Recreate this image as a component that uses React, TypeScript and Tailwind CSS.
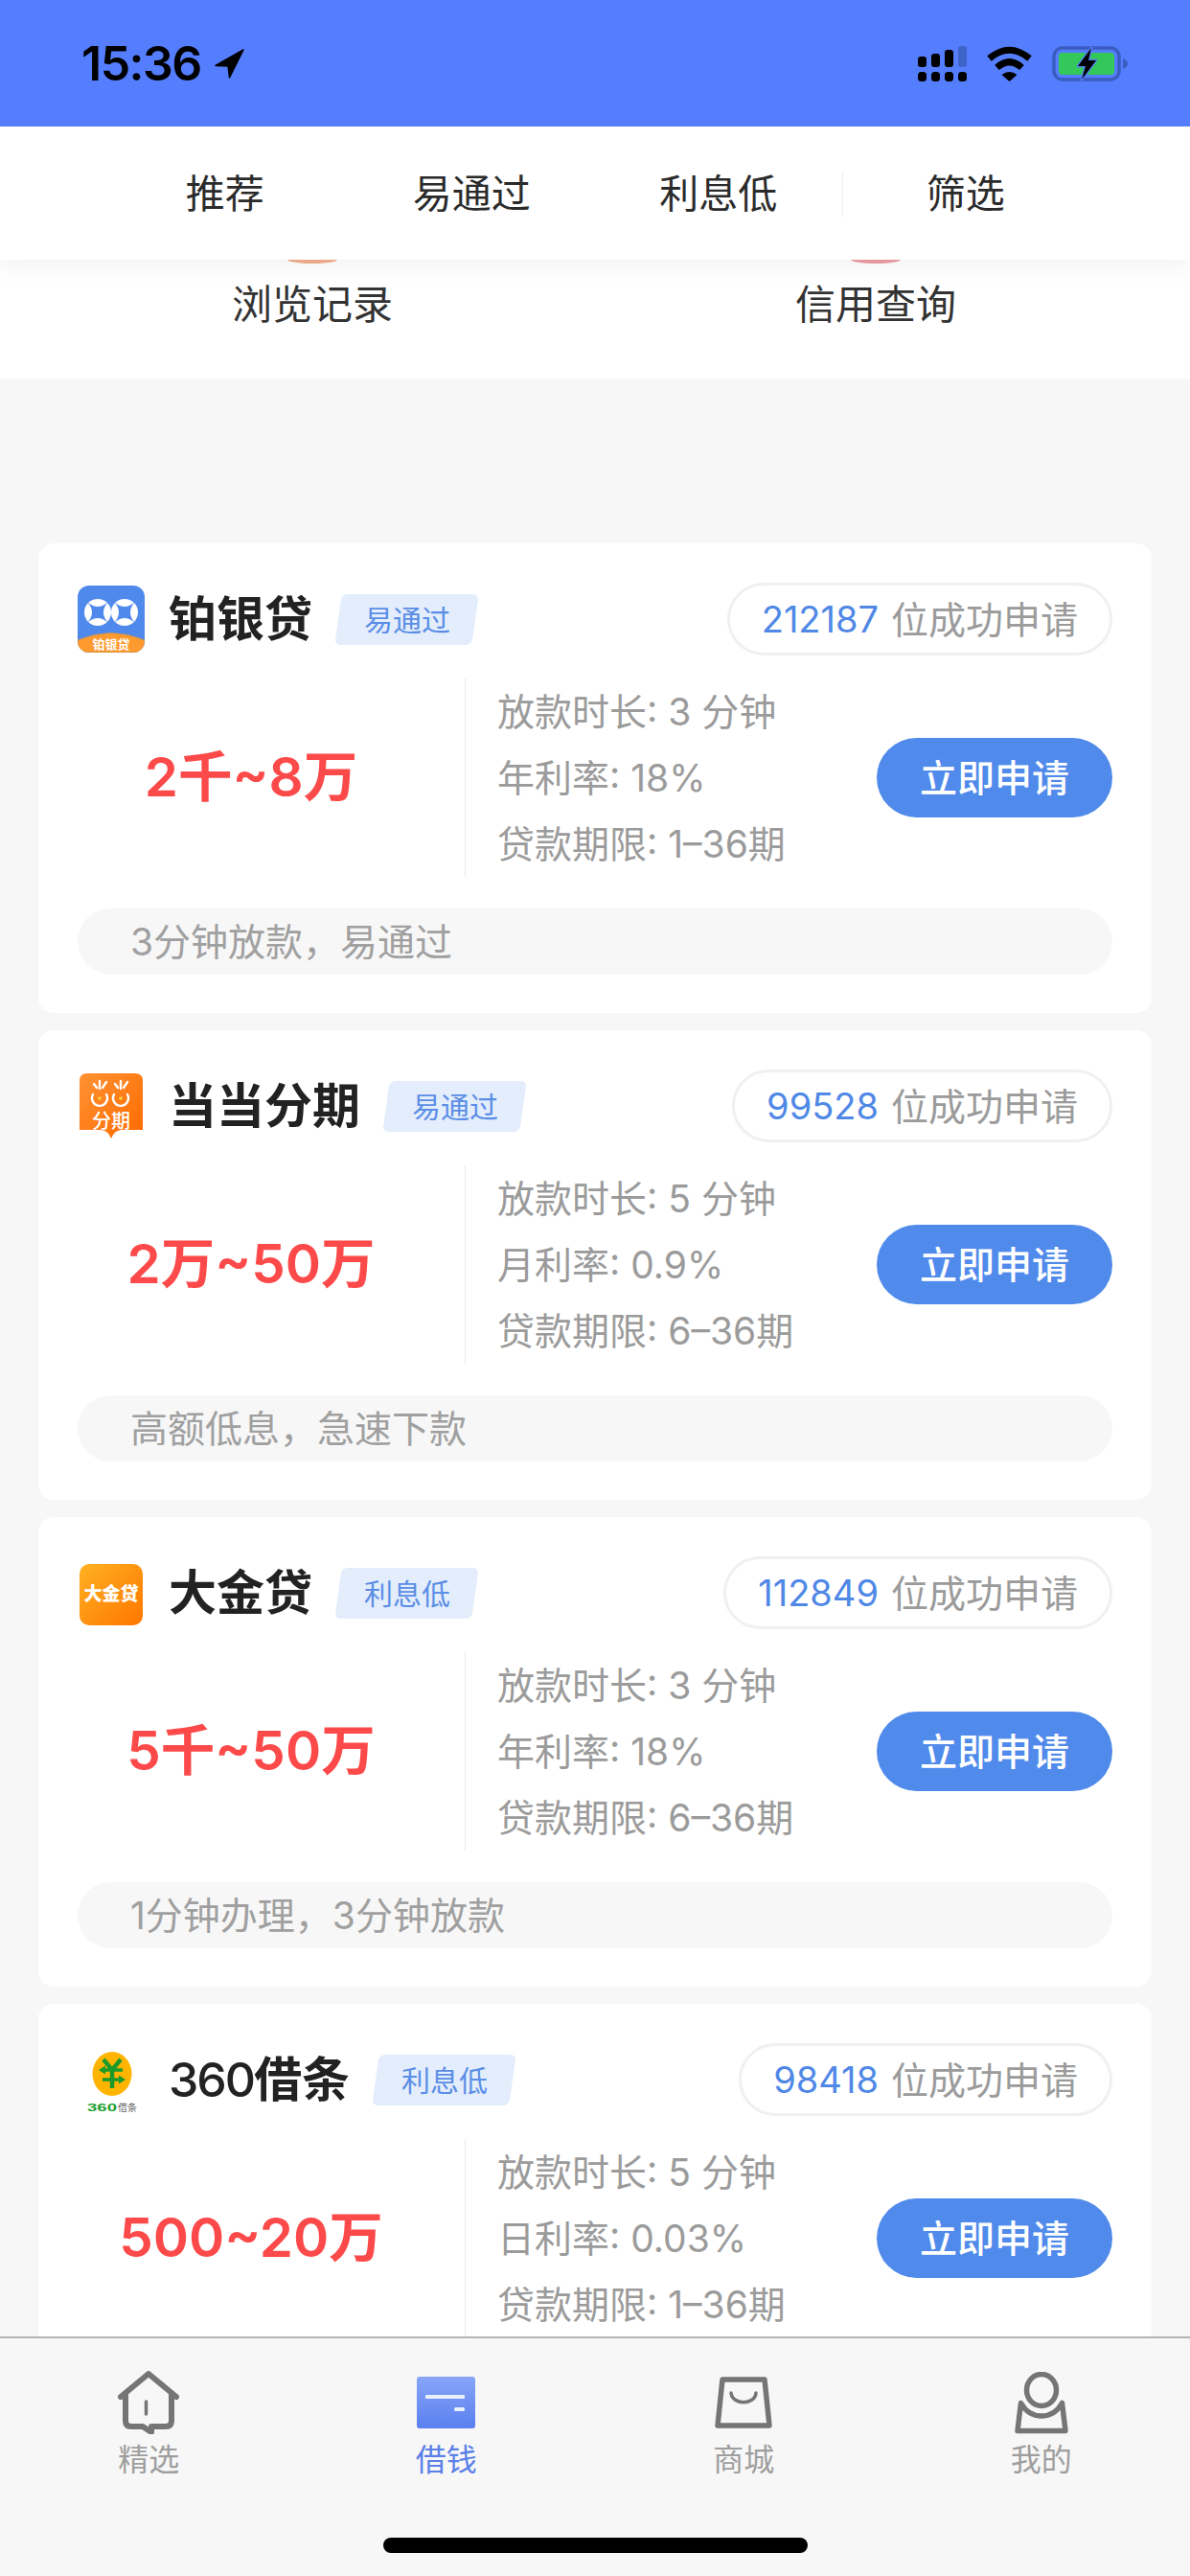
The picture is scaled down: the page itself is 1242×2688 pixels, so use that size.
import type { ReactNode } from "react";

const FONT = "font-['Inter','Noto_Sans_CJK_SC',sans-serif]";

interface Loan {
  name: ReactNode;
  tag: string;
  count: string;
  amount: string;
  time: string;
  rate: string;
  term: string;
  note?: string;
  logo: ReactNode;
}

function BoyinLogo() {
  const star = (x: number, y: number) => {
    const d = 11;
    const k = 1;
    return `M${x - d} ${y - d}Q${x} ${y - k} ${x + d} ${y - d}Q${x + k} ${y} ${x + d} ${y + d}Q${x} ${y + k} ${x - d} ${y + d}Q${x - k} ${y} ${x - d} ${y - d}Z`;
  };
  return (
    <svg width="70" height="70" viewBox="0 0 70 70">
      <defs>
        <clipPath id="boyin-clip">
          <rect width="70" height="70" rx="12" />
        </clipPath>
      </defs>
      <g clipPath="url(#boyin-clip)">
        <rect width="70" height="70" fill="#5089ec" />
        <circle cx="21" cy="28" r="14" fill="#fff" />
        <circle cx="49" cy="28" r="14" fill="#fff" />
        <path d={star(21, 28)} fill="#5089ec" />
        <path d={star(49, 28)} fill="#5089ec" />
        <path d="M0 57Q35 42 70 57V70H0Z" fill="#ff9a2e" stroke="#b5926a" strokeWidth="1" />
        <text x="35" y="65.500" textAnchor="middle" fontSize="13" fontWeight="700" fill="#fff" fontFamily="Noto Sans CJK SC, sans-serif">
          铂银贷
        </text>
      </g>
    </svg>
  );
}

function DangdangLogo() {
  return (
    <svg width="70" height="70" viewBox="-2 -1 70 70">
      <defs>
        <linearGradient id="dd-grad" x1="0" y1="0" x2="1" y2="1">
          <stop offset="0" stopColor="#ff9233" />
          <stop offset="1" stopColor="#ff6a00" />
        </linearGradient>
      </defs>
      <path d="M8 0H58Q66 0 66 8V59H43Q36 60 33 68Q30 60 23 59H0V8Q0 0 8 0Z" fill="url(#dd-grad)" />
      <g stroke="#fff" strokeWidth="2.400" fill="none" strokeLinecap="round">
        <path d="M14 22A8 8 0 1 0 28 22" />
        <path d="M36 22A8 8 0 1 0 50 22" />
        <path d="M21 8V16M15 11L18 15M28 9L24 15" />
        <path d="M43 8V16M37 11L40 15M50 9L46 15" />
      </g>
      <circle cx="21" cy="26" r="1.800" fill="#ffd23f" />
      <circle cx="43" cy="26" r="1.800" fill="#ffd23f" />
      <text x="33" y="56.500" textAnchor="middle" fontSize="20" fontWeight="500" fill="#fff" fontFamily="Noto Sans CJK SC, sans-serif">
        分期
      </text>
    </svg>
  );
}

function DajinLogo() {
  return (
    <svg width="70" height="70" viewBox="-2 -5 70 70">
      <defs>
        <linearGradient id="dj-grad" x1="0" y1="0" x2="1" y2="1">
          <stop offset="0" stopColor="#ffb122" />
          <stop offset="1" stopColor="#ff7600" />
        </linearGradient>
      </defs>
      <rect width="66" height="64" rx="10" fill="url(#dj-grad)" />
      <text x="33" y="38" textAnchor="middle" fontSize="19" fontWeight="900" fill="#fff" fontFamily="Noto Sans CJK SC, sans-serif">
        大金贷
      </text>
    </svg>
  );
}

function Jietiao360Logo() {
  return (
    <svg width="70" height="70" viewBox="0 0 70 70">
      <ellipse cx="36" cy="29" rx="20.500" ry="23" fill="#ffb500" />
      <g stroke="#1b9a2b" strokeWidth="4.500" fill="none">
        <path d="M27 14L36 25L45 14M36 25V44" />
        <path d="M27 25H47M26 35H45" strokeWidth="3.500" />
      </g>
      <path d="M29 20.500L22 25L29 29.500Z" fill="#1b9a2b" />
      <path d="M43 30.500L50 35L43 39.500Z" fill="#1b9a2b" />
      <text x="10" y="68" fontSize="11" fontWeight="700" fill="#1d9f2e" textLength="31" lengthAdjust="spacingAndGlyphs" fontFamily="Liberation Sans, sans-serif">
        360
      </text>
      <text x="42" y="67.500" fontSize="10" fill="#666" fontFamily="Noto Sans CJK SC, sans-serif">
        借条
      </text>
    </svg>
  );
}

const loans: Loan[] = [
  { name: "铂银贷", tag: "易通过", count: "212187", amount: "2千~8万", time: "放款时长: 3 分钟", rate: "年利率: 18%", term: "贷款期限: 1–36期", note: "3分钟放款，易通过", logo: <BoyinLogo /> },
  { name: "当当分期", tag: "易通过", count: "99528", amount: "2万~50万", time: "放款时长: 5 分钟", rate: "月利率: 0.9%", term: "贷款期限: 6–36期", note: "高额低息，急速下款", logo: <DangdangLogo /> },
  { name: "大金贷", tag: "利息低", count: "112849", amount: "5千~50万", time: "放款时长: 3 分钟", rate: "年利率: 18%", term: "贷款期限: 6–36期", note: "1分钟办理，3分钟放款", logo: <DajinLogo /> },
  { name: <><span className="font-medium tracking-[-2px]">360</span>借条</>, tag: "利息低", count: "98418", amount: "500~20万", time: "放款时长: 5 分钟", rate: "日利率: 0.03%", term: "贷款期限: 1–36期", logo: <Jietiao360Logo /> },
];

function StatusBar() {
  return (
    <div className="h-[132px] shrink-0 bg-[#557eff] flex items-center pl-[85px] pr-[65px]">
      <span className="text-[50px] font-semibold leading-none text-black tracking-[-1.5px]">15:36</span>
      {/* location arrow */}
      <svg width="31" height="31" viewBox="0 0 31 31" className="ml-[14px]">
        <path d="M30 1L1 17.500L14 18L15.500 30Z" fill="#000" stroke="#000" strokeWidth="1.500" strokeLinejoin="round" />
      </svg>
      <div className="ml-auto flex items-center">
        <svg width="51" height="37" viewBox="0 0 51 37">
          <rect x="0" y="11" width="9" height="11" rx="3" fill="#000" />
          <rect x="14" y="8" width="9" height="14" rx="3" fill="#000" />
          <rect x="28" y="4" width="9" height="18" rx="3" fill="#000" />
          <rect x="42" y="0" width="9" height="22" rx="3" fill="#3f64c9" />
          <rect x="0" y="27" width="9" height="10" rx="3.500" fill="#000" />
          <rect x="14" y="27" width="9" height="10" rx="3.500" fill="#000" />
          <rect x="28" y="27" width="9" height="10" rx="3.500" fill="#000" />
          <rect x="42" y="27" width="9" height="10" rx="3.500" fill="#000" />
        </svg>
        <svg width="47" height="37" viewBox="0 0 47 37" className="ml-[21px]">
          <path d="M2.500 13Q23.500 -4.500 44.500 13" stroke="#000" strokeWidth="7" fill="none" />
          <path d="M10.500 22.500Q23.500 11 36.500 22.500" stroke="#000" strokeWidth="7" fill="none" />
          <path d="M15.500 30Q23.500 24 31.500 30L23.500 37Z" fill="#000" />
        </svg>
        <svg width="79" height="37" viewBox="0 0 79 37" className="ml-[21px]">
          <rect x="2" y="2" width="68" height="33" rx="9" fill="none" stroke="#3a5cc0" strokeWidth="3.500" />
          <rect x="7" y="7" width="58" height="23" rx="4" fill="#34c759" />
          <path d="M74 13Q79 15 79 18.500Q79 22 74 24Z" fill="#3a5cc0" />
          <path d="M41 2L27 21H35L31 35L46 15H38Z" fill="#000" stroke="#557eff" strokeWidth="2.500" strokeLinejoin="round" paintOrder="stroke" />
        </svg>
      </div>
    </div>
  );
}

function FilterBar() {
  const cell = "flex items-center justify-center text-[41px] leading-none text-[#2b2b2b]";
  return (
    <div className="h-[139px] shrink-0 bg-white relative z-10 shadow-[0_8px_24px_rgba(0,0,0,0.05)] grid grid-cols-4 px-[106px] pt-[2px] items-center">
      <div className={cell}>推荐</div>
      <div className={cell}>易通过</div>
      <div className={cell}>利息低</div>
      <div className={`${cell} h-[48px] border-l border-[#eeeeee]`}>筛选</div>
    </div>
  );
}

function QuickLinks() {
  const links = [
    { label: "浏览记录", cap: "bg-[#f3b18f]" },
    { label: "信用查询", cap: "bg-[#ee9ea6]" },
  ];
  return (
    <div className="h-[124px] bg-white flex px-[155px] gap-[246px]">
      {links.map((l) => (
        <div key={l.label} className="w-[342px] flex flex-col items-center">
          <div className={`w-[52px] h-[4px] rounded-b-[26px_4px] ${l.cap}`} />
          <div className="mt-[18px] text-[42px] leading-[50px] text-[#333333]">{l.label}</div>
        </div>
      ))}
    </div>
  );
}

function LoanCard({ loan }: { loan: Loan }) {
  return (
    <div className="h-[490px] shrink-0 bg-white rounded-[16px] px-[41px] pt-[41px]">
      <div className="flex items-center h-[76px]">
        <div className="w-[70px] h-[70px] shrink-0">{loan.logo}</div>
        <div className="ml-[25px] text-[50px] leading-none font-semibold text-[#222222] whitespace-nowrap">{loan.name}</div>
        <div className="ml-[27px] w-[143px] h-[53px] rounded-[6px] bg-[#e3edfc] -skew-x-[8deg] flex items-center justify-center">
          <span className="skew-x-[8deg] text-[30px] leading-none text-[#5b8ee6]">{loan.tag}</span>
        </div>
        <div className="ml-auto h-[76px] rounded-full border-[3px] border-[#f0f0f0] px-[33px] flex items-center text-[39px] leading-none text-[#9b9b9b] whitespace-nowrap">
          <span className="text-[38px] text-[#5088e6]">{loan.count}</span>
          <span className="ml-[13px]">位成功申请</span>
        </div>
      </div>
      <div className="mt-[24px] h-[207px] flex items-center">
        <div className="w-[405px] h-full shrink-0 border-r border-[#e8e8e8] pr-[42px] flex items-center justify-center">
          <span className="font-semibold text-[56.5px] leading-none text-[#fc4a4a] whitespace-nowrap">{loan.amount}</span>
        </div>
        <div className="ml-[33px] text-[39px] leading-[69px] text-[#9b9b9b] whitespace-nowrap">
          <div>{loan.time}</div>
          <div>{loan.rate}</div>
          <div>{loan.term}</div>
        </div>
        <button className="ml-auto w-[246px] h-[83px] rounded-full bg-[#508aeb] text-white text-[39px] font-medium leading-none">立即申请</button>
      </div>
      {loan.note && (
        <div className="mt-[33px] h-[69px] rounded-full bg-[#f7f7f7] pl-[55px] flex items-center text-[39px] leading-none text-[#a0a0a0]">{loan.note}</div>
      )}
    </div>
  );
}

function HomeIcon() {
  return (
    <svg width="64" height="66" viewBox="0 0 64 66" fill="none">
      <path d="M3 27L32 3L61 27" stroke="#757575" strokeWidth="6" strokeLinejoin="round" strokeLinecap="round" />
      <path d="M8 24V52Q8 58 14 58H26L35 64V58H50Q56 58 56 52V24" stroke="#757575" strokeWidth="6" strokeLinejoin="round" />
      <path d="M29.500 32V45" stroke="#757575" strokeWidth="3.500" strokeLinecap="round" />
    </svg>
  );
}

function WalletIcon() {
  return (
    <svg width="61" height="54" viewBox="0 0 61 54">
      <defs>
        <linearGradient id="wallet-grad" x1="0" y1="0" x2="0" y2="1">
          <stop offset="0" stopColor="#88a5f8" />
          <stop offset="1" stopColor="#5a80f0" />
        </linearGradient>
      </defs>
      <rect width="61" height="54" rx="3" fill="url(#wallet-grad)" />
      <rect x="9" y="19" width="41" height="4" rx="1" fill="#eaf0fe" />
      <rect x="39" y="32" width="11" height="4" rx="1.500" fill="#eaf0fe" />
    </svg>
  );
}

function BagIcon() {
  return (
    <svg width="60" height="54" viewBox="0 0 60 54" fill="none">
      <path d="M8 3H52L57 51H3Z" stroke="#757575" strokeWidth="5.500" strokeLinejoin="round" />
      <path d="M17 17C18 30 42 30 43 17" stroke="#757575" strokeWidth="3.500" strokeLinecap="round" />
    </svg>
  );
}

function UserIcon() {
  return (
    <svg width="56" height="65" viewBox="0 0 56 65" fill="none">
      <ellipse cx="28" cy="19" rx="15.500" ry="16.500" stroke="#757575" strokeWidth="5.500" />
      <path d="M6.500 32.500Q14 46 28 46Q42 46 49.500 32.500L53 61.500H3Z" stroke="#757575" strokeWidth="5.500" strokeLinejoin="round" />
    </svg>
  );
}

function BottomTabs() {
  const tabs = [
    { label: "精选", icon: <HomeIcon />, active: false },
    { label: "借钱", icon: <WalletIcon />, active: true },
    { label: "商城", icon: <BagIcon />, active: false },
    { label: "我的", icon: <UserIcon />, active: false },
  ];
  return (
    <div className="h-[250px] shrink-0 bg-[#f7f7f7] border-t-2 border-[#b4b4b4] relative z-10">
      <div className="grid grid-cols-4 h-[144px]">
        {tabs.map((t) => (
          <div key={t.label} className="flex flex-col items-center">
            <div className="h-[105px] flex items-center justify-center pt-[29px]">{t.icon}</div>
            <div className={`mt-[2px] text-[32px] leading-[40px] ${t.active ? "text-[#5a80e8]" : "text-[#9e9e9e]"}`}>{t.label}</div>
          </div>
        ))}
      </div>
      <div className="mt-[64px] mx-auto w-[443px] h-[16px] rounded-full bg-black" />
    </div>
  );
}

export default function App() {
  return (
    <div className={`w-[1242px] h-[2688px] flex flex-col overflow-hidden bg-[#f7f7f7] ${FONT}`}>
      <StatusBar />
      <FilterBar />
      <main className="flex-1 min-h-0 overflow-hidden">
        <QuickLinks />
        <div className="mt-[172px] px-[40px] flex flex-col gap-[18px]">
          {loans.map((loan) => (
            <LoanCard key={loan.count} loan={loan} />
          ))}
        </div>
      </main>
      <BottomTabs />
    </div>
  );
}
